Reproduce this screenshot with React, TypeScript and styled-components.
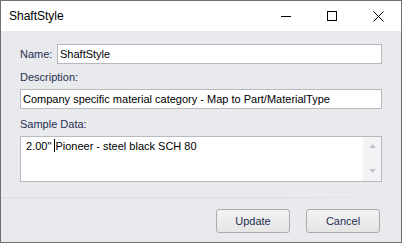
import React from "react";
import styled, { createGlobalStyle } from "styled-components";

const GlobalStyle = createGlobalStyle`
  html, body {
    margin: 0;
    padding: 0;
    background: #ffffff;
  }
  * {
    box-sizing: border-box;
  }
`;

const Window = styled.div`
  width: 402px;
  height: 243px;
  border: 1px solid #6f6f6f;
  display: flex;
  flex-direction: column;
  font-family: "Liberation Sans", Arial, sans-serif;
  font-size: 11px;
  overflow: hidden;
`;

const TitleBar = styled.div`
  height: 30px;
  flex-shrink: 0;
  background: #ffffff;
  display: flex;
  align-items: center;
`;

const Title = styled.span`
  flex: 1;
  padding-left: 8px;
  font-size: 12px;
  color: #000000;
`;

const CaptionButton = styled.div`
  width: 46px;
  height: 30px;
  display: flex;
  align-items: center;
  justify-content: center;
`;

const Client = styled.div`
  flex: 1;
  background: #e9eaee;
  display: flex;
  flex-direction: column;
  padding: 13px 19px 9px 19px;
`;

const Row = styled.div`
  display: flex;
  align-items: center;
`;

const Label = styled.label<{ $top?: number }>`
  display: block;
  color: #1e2f50;
  line-height: 16px;
  margin-top: ${({ $top }) => $top ?? 0}px;
  margin-bottom: 4px;
`;

const InlineLabel = styled(Label)`
  margin: 0;
  width: 37px;
  flex-shrink: 0;
`;

const Field = styled.div`
  height: 20px;
  flex-shrink: 0;
  background: #ffffff;
  border: 1px solid #b7b9bd;
  color: #000000;
  line-height: 18px;
  padding-left: 2px;
  white-space: nowrap;
  overflow: hidden;
`;

const RowField = styled(Field)`
  flex: 1;
`;

const Memo = styled.div`
  height: 46px;
  flex-shrink: 0;
  background: #ffffff;
  border: 1px solid #b7b9bd;
  display: flex;
`;

const MemoText = styled.div`
  flex: 1;
  color: #000000;
  padding: 1px 5px;
  line-height: 16px;
`;

const Caret = styled.span`
  display: inline-block;
  width: 1px;
  height: 13px;
  background: #000000;
  vertical-align: -2px;
`;

const ScrollBar = styled.div`
  width: 18px;
  background: #f3f3f5;
  display: flex;
  flex-direction: column;
  justify-content: space-between;
  align-items: center;
  padding: 7px 0 8px;
`;

const Separator = styled.div`
  height: 1px;
  margin: 15px -19px 0 -19px;
  background: linear-gradient(to right, #dcdde1, #dcdde1 70%, #e9eaee);
`;

const Footer = styled.div`
  display: flex;
  justify-content: flex-end;
  gap: 16px;
  margin-top: auto;
  padding-right: 2px;
`;

const Button = styled.button`
  width: 74px;
  height: 24px;
  border: 1px solid #acacac;
  border-radius: 3px;
  background: linear-gradient(#f3f3f3, #e5e5e5);
  color: #1e2f50;
  font-family: inherit;
  font-size: 11px;
  padding: 0;
`;

const Arrow = ({ up }: { up?: boolean }) => (
  <svg width="7" height="4" viewBox="0 0 7 4">
    <path d={up ? "M0 4 L3.5 0 L7 4 Z" : "M0 0 L3.5 4 L7 0 Z"} fill="#c3c4c8" />
  </svg>
);

const App = () => (
  <>
    <GlobalStyle />
    <Window>
      <TitleBar>
        <Title>ShaftStyle</Title>
        <CaptionButton>
          <svg width="10" height="10" viewBox="0 0 10 10">
            <path d="M0 5.5 H10" stroke="#000" strokeWidth="1" />
          </svg>
        </CaptionButton>
        <CaptionButton>
          <svg width="10" height="10" viewBox="0 0 10 10">
            <rect x="0.5" y="0.5" width="9" height="9" fill="none" stroke="#000" />
          </svg>
        </CaptionButton>
        <CaptionButton>
          <svg width="11" height="11" viewBox="0 0 11 11">
            <path d="M0.5 0.5 L10.5 10.5 M10.5 0.5 L0.5 10.5" stroke="#000" strokeWidth="1" />
          </svg>
        </CaptionButton>
      </TitleBar>
      <Client>
        <Row>
          <InlineLabel>Name:</InlineLabel>
          <RowField>ShaftStyle</RowField>
        </Row>
        <Label $top={5}>Description:</Label>
        <Field>Company specific material category - Map to Part/MaterialType</Field>
        <Label $top={7}>Sample Data:</Label>
        <Memo>
          <MemoText>
            2.00"&nbsp;<Caret />Pioneer - steel black SCH 80
          </MemoText>
          <ScrollBar>
            <Arrow up />
            <Arrow />
          </ScrollBar>
        </Memo>
        <Separator />
        <Footer>
          <Button>Update</Button>
          <Button>Cancel</Button>
        </Footer>
      </Client>
    </Window>
  </>
);

export default App;
